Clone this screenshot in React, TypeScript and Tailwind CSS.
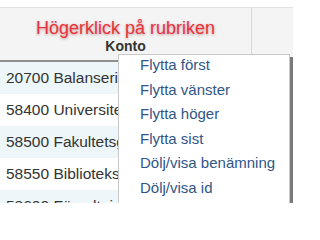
const rows = [
  "20700 Balanseringskonto",
  "58400 Universitetsgemensamt",
  "58500 Fakultetsgemensamt",
  "58550 Biblioteksservice",
  "58600 Förvaltning",
];

const menuItems = [
  "Flytta först",
  "Flytta vänster",
  "Flytta höger",
  "Flytta sist",
  "Dölj/visa benämning",
  "Dölj/visa id",
];

export default function App() {
  return (
    <div
      className="relative h-[203px] w-[293px] overflow-hidden bg-white"
      style={{ fontFamily: '"Liberation Sans", Arial, sans-serif' }}
    >
      <div className="h-[7px] bg-white" />
      {/* header */}
      <div className="flex h-[55px] border-t border-b-2 border-t-[#e2e2e2] border-b-[#8f8f8f] bg-[#f4f4f4]">
        <div className="flex w-[252px] flex-col items-center border-r border-[#d8d8d8]">
          <span className="mt-[10px] text-[18px] leading-[21px] text-[#e8333d] [text-shadow:0_1px_3px_rgba(120,0,0,0.4)]">
            Högerklick på rubriken
          </span>
          <span className="-mt-[1px] text-[14px] font-bold leading-[16px] text-[#333]">
            Konto
          </span>
        </div>
        <div className="flex-1" />
      </div>
      {/* rows */}
      <div className="flex flex-col">
        {rows.map((r, i) => (
          <div
            key={r}
            className={
              "flex h-[32px] shrink-0 items-center whitespace-nowrap pl-[6px] text-[15.5px] text-[#333] " +
              (i % 2 === 0 ? "bg-[#edf6f8]" : "bg-white")
            }
          >
            {r}
          </div>
        ))}
      </div>
      {/* context menu */}
      <div className="absolute left-[118px] top-[54px] w-[172px] border border-[#c8c8c8] bg-white pb-[2px] shadow-[3px_3px_0_#7a7a7a]">
        {menuItems.map((m) => (
          <div
            key={m}
            className="flex h-[24.6px] items-center whitespace-nowrap pb-[4px] pl-[21px] text-[15px] text-[#2f5687]"
          >
            {m}
          </div>
        ))}
      </div>
    </div>
  );
}
